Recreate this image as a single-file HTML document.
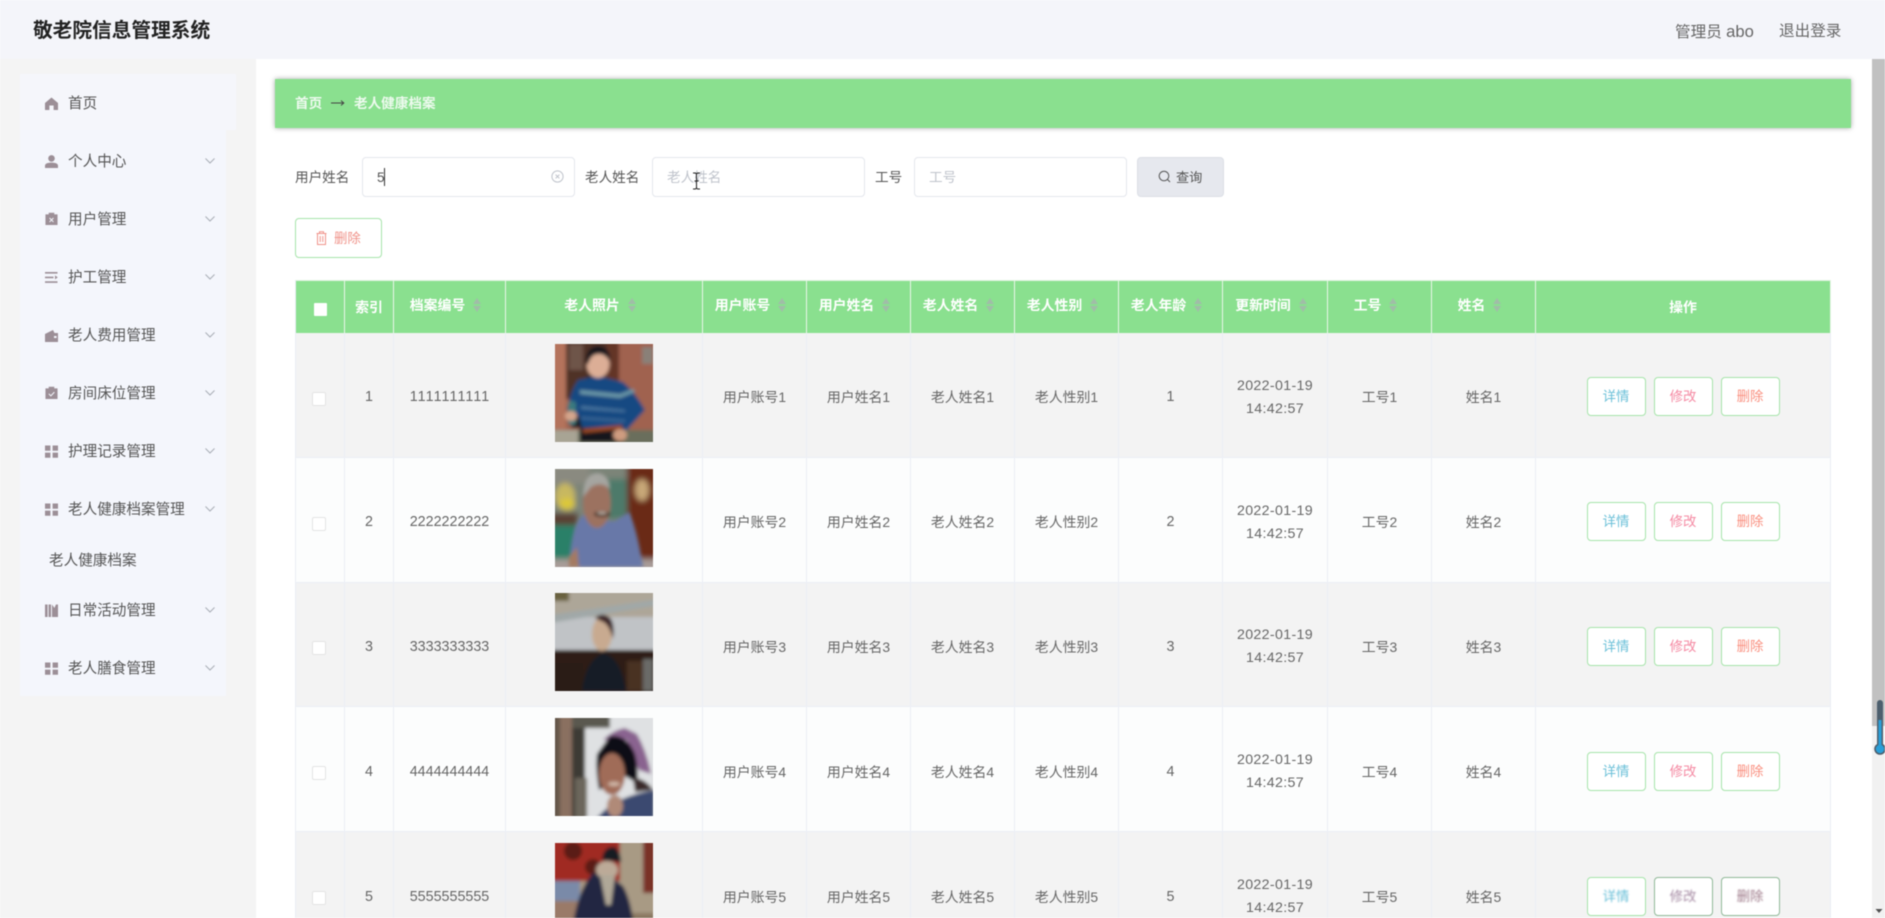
<!DOCTYPE html>
<html lang="zh-CN"><head><meta charset="utf-8"><title>敬老院信息管理系统</title>
<style>
*{box-sizing:border-box}
html,body{margin:0;padding:0;width:1885px;height:918px;overflow:hidden;background:#fff}
body{position:relative;font-family:"Liberation Sans","Noto Sans CJK SC",sans-serif;color:#666;font-kerning:none}
.a{position:absolute;white-space:nowrap}
#wrap{position:absolute;left:0;top:0;width:1885px;height:918px;overflow:hidden;filter:blur(.45px)}
.mi{position:absolute;left:68px;font-size:14.6px;line-height:20px;color:#555;white-space:nowrap;margin-top:1px}
.ic{position:absolute;left:45px;width:13px;height:13px;fill:#9c8f97}
.ch{position:absolute;left:205px;width:10px;height:6px;fill:none;stroke:#a8adb5;stroke-width:1}
.inp{position:absolute;top:157px;height:40px;background:#fff;border:1px solid #e4e7ed;border-radius:4px}
.lb{position:absolute;top:168px;font-size:13.6px;line-height:20px;color:#555;white-space:nowrap}
.ph{position:absolute;top:168px;font-size:13.6px;line-height:20px;color:#c0c4cc;white-space:nowrap}
table{position:absolute;left:295px;top:280px;width:1536px;table-layout:fixed;border-collapse:separate;border-spacing:0;font-size:13.9px;color:#666}
th{height:53px;background:#8ae08f;color:#fff;font-size:13.9px;font-weight:700;padding:0;text-align:center;border-right:1px solid #eaf6ea;border-top:1px solid #dff3df}
th:first-child,td:first-child{border-left:1px solid #ebeef5}
th.s{padding:0 8px 4px 0}
th i{display:inline-block;width:8px;height:14px;margin-left:8px;vertical-align:-2px;position:relative}
th i:before,th i:after{content:"";position:absolute;left:0;border-left:4px solid transparent;border-right:4px solid transparent}
th i:before{top:0;border-bottom:6px solid #a0bda8}
th i:after{bottom:0;border-top:6px solid #a0bda8}
td{height:124.8px;padding:6px 0 0;text-align:center;border-right:1px solid #ebeef5;border-bottom:1px solid #ebeef5;line-height:23px;vertical-align:middle}
tr.o td{background:#f3f3f3}
tr.e td{background:#fcfdfd}
td.n{font-size:14.3px}
td.t{font-size:14.2px;letter-spacing:.35px}
.cb{display:inline-block;width:14px;height:14px;background:#fff;border:1px solid #e4e4e4;border-radius:2px;vertical-align:middle;margin-left:-3px}
.cbh{display:inline-block;width:13px;height:13px;background:#fff;border-radius:1px;vertical-align:middle;margin-top:3px}
td svg.ph1{display:block;margin:0 0 0 49px;width:98px;height:98px;position:relative;top:-5px}
.b{display:inline-block;width:59px;height:39px;line-height:37px;background:#fff;border:1px solid #a6e4aa;border-radius:4px;font-size:13.4px;margin:0 4px;vertical-align:middle;position:relative;top:-1px}
.c1{color:#6bc0d8}.c2{color:#f58aa3}.c3{color:#fa8f7f}
.g{filter:blur(.7px)}
</style></head>
<body>
<div id="wrap">
<svg width="0" height="0" style="position:absolute"><defs><filter id="bl" x="-20%" y="-20%" width="140%" height="140%"><feGaussianBlur stdDeviation="1.8"/></filter><filter id="bl2" x="-30%" y="-30%" width="160%" height="160%"><feGaussianBlur stdDeviation="3"/></filter></defs></svg>

<!-- header -->
<div class="a" style="left:0;top:0;width:1885px;height:59px;background:#f4f5fa"></div>
<div class="a" style="left:33px;top:17px;font-size:19.7px;line-height:28px;font-weight:700;color:#222">敬老院信息管理系统</div>
<div class="a" style="left:1675px;top:21px;font-size:15.6px;line-height:22px;color:#666">管理员 <span style="font-size:16.6px">abo</span></div>
<div class="a" style="left:1779px;top:21px;font-size:15.6px;line-height:22px;color:#666">退出登录</div>

<!-- sidebar -->
<div class="a" style="left:0;top:59px;width:256px;height:859px;background:#f4f4f4"></div>
<div class="a" style="left:20px;top:74px;width:206px;height:622px;background:#f4f6fc"></div>
<div class="a" style="left:20px;top:74px;width:216px;height:56px;background:#f5f6fb"></div>

<svg class="ic" style="top:97px" viewBox="0 0 13 13"><path d="M6.5 0.5 L13 6 V13 H8.6 V8.5 H4.4 V13 H0 V6 Z"/></svg>
<div class="mi" style="top:93px">首页</div>

<svg class="ic" style="top:155px" viewBox="0 0 13 13"><circle cx="6.5" cy="3.4" r="3.3"/><path d="M0 13 V10.6 C0 8.6 2.6 7.6 6.5 7.6 S13 8.6 13 10.6 V13 Z"/></svg>
<div class="mi" style="top:151px">个人中心</div>
<svg class="ch" style="top:158px" viewBox="0 0 10 6"><path d="M.5 .5 5 5 9.5 .5"/></svg>

<svg class="ic" style="top:212px" viewBox="0 0 13 14"><path d="M0 2.5 H3.5 V.8 H9.5 V2.5 H13 V14 H0 Z"/><path d="M4.4 6.5 8.6 10.7 M8.6 6.5 4.4 10.7" stroke="#f4f6fc" stroke-width="1.1" fill="none"/></svg>
<div class="mi" style="top:209px">用户管理</div>
<svg class="ch" style="top:216px" viewBox="0 0 10 6"><path d="M.5 .5 5 5 9.5 .5"/></svg>

<svg class="ic" style="top:271px" viewBox="0 0 13 13"><path d="M0 1h12.5v1.6H0zM0 5.6h8.5v1.6H0zM10 4.4l2.8 2-2.8 2zM0 10.3h12.5v1.6H0z"/></svg>
<div class="mi" style="top:267px">护工管理</div>
<svg class="ch" style="top:274px" viewBox="0 0 10 6"><path d="M.5 .5 5 5 9.5 .5"/></svg>

<svg class="ic" style="top:329px" viewBox="0 0 13 13"><path d="M0 5 L8 1 L9.5 4 H13 V13 H0 Z"/><rect x="9" y="7" width="2.6" height="2" fill="#f4f6fc"/></svg>
<div class="mi" style="top:325px">老人费用管理</div>
<svg class="ch" style="top:332px" viewBox="0 0 10 6"><path d="M.5 .5 5 5 9.5 .5"/></svg>

<svg class="ic" style="top:386px" viewBox="0 0 13 14"><path d="M0 2.5 H3.5 V.8 H9.5 V2.5 H13 V14 H0 Z"/><path d="M3.6 8.4 5.8 10.6 9.6 6.6" stroke="#f4f6fc" stroke-width="1.1" fill="none"/></svg>
<div class="mi" style="top:383px">房间床位管理</div>
<svg class="ch" style="top:390px" viewBox="0 0 10 6"><path d="M.5 .5 5 5 9.5 .5"/></svg>

<svg class="ic" style="top:445px" viewBox="0 0 13 13"><path d="M0 .5h5.4v5.2H0zM7.6 .5H13v5.2H7.6zM0 7.6h5.4v5.2H0zM7.6 7.6H13v5.2H7.6z"/></svg>
<div class="mi" style="top:441px">护理记录管理</div>
<svg class="ch" style="top:448px" viewBox="0 0 10 6"><path d="M.5 .5 5 5 9.5 .5"/></svg>

<svg class="ic" style="top:503px" viewBox="0 0 13 13"><path d="M0 .5h5.4v5.2H0zM7.6 .5H13v5.2H7.6zM0 7.6h5.4v5.2H0zM7.6 7.6H13v5.2H7.6z"/></svg>
<div class="mi" style="top:499px">老人健康档案管理</div>
<svg class="ch" style="top:506px" viewBox="0 0 10 6"><path d="M.5 .5 5 5 9.5 .5"/></svg>

<div class="mi" style="left:49px;top:550px;color:#555">老人健康档案</div>

<svg class="ic" style="top:604px" viewBox="0 0 13 13"><path d="M0 .5h2.6V13H0zM3.6 .5h2.4V13H3.6zM7 .5 L9.4 4 L11 .5 H13 V13 H7Z"/></svg>
<div class="mi" style="top:600px">日常活动管理</div>
<svg class="ch" style="top:607px" viewBox="0 0 10 6"><path d="M.5 .5 5 5 9.5 .5"/></svg>

<svg class="ic" style="top:662px" viewBox="0 0 13 13"><path d="M0 .5h5.4v5.2H0zM7.6 .5H13v5.2H7.6zM0 7.6h5.4v5.2H0zM7.6 7.6H13v5.2H7.6z"/></svg>
<div class="mi" style="top:658px">老人膳食管理</div>
<svg class="ch" style="top:665px" viewBox="0 0 10 6"><path d="M.5 .5 5 5 9.5 .5"/></svg>

<!-- breadcrumb -->
<div class="a" style="left:275px;top:79px;width:1576px;height:49px;background:#8ae08f;box-shadow:0 0 5px rgba(0,0,0,.35)"></div>
<div class="a" style="left:295px;top:94px;font-size:13.6px;line-height:20px;color:#fff;font-weight:700;opacity:.85">首页</div>
<svg class="a" style="left:331px;top:99px" width="14" height="8" viewBox="0 0 14 8"><path d="M0 4h12.5M10 1.6 12.8 4 10 6.4" fill="none" stroke="#444" stroke-width="1"/></svg>
<div class="a" style="left:354px;top:94px;font-size:13.6px;line-height:20px;color:#fff;font-weight:700;opacity:.85">老人健康档案</div>

<!-- search -->
<div class="lb" style="left:295px">用户姓名</div>
<div class="inp" style="left:362px;width:213px"></div>
<div class="a" style="left:377px;top:168px;font-size:13.6px;line-height:20px;color:#555">5</div>
<div class="a" style="left:384px;top:168px;width:1px;height:18px;background:#333"></div>
<svg class="a" style="left:551px;top:170px" width="13" height="13" viewBox="0 0 13 13"><circle cx="6.5" cy="6.5" r="5.6" fill="none" stroke="#c0c4cc"/><path d="M4.6 4.6 8.4 8.4M8.4 4.6 4.6 8.4" stroke="#c0c4cc"/></svg>
<div class="lb" style="left:585px">老人姓名</div>
<div class="inp" style="left:652px;width:213px"></div>
<div class="ph" style="left:667px">老人姓名</div>
<svg class="a" style="left:692px;top:172px" width="9" height="18" viewBox="0 0 9 18"><path d="M1 1h2.5l1 1 1-1H8M4.5 2v14M1 17h2.5l1-1 1 1H8M2.5 9h4" fill="none" stroke="#222" stroke-width="1"/></svg>
<div class="lb" style="left:875px">工号</div>
<div class="inp" style="left:914px;width:213px"></div>
<div class="ph" style="left:929px">工号</div>
<div class="a" style="left:1137px;top:157px;width:87px;height:40px;background:#e6e8ee;border:1px solid #dcdfe6;border-radius:4px"></div>
<svg class="a" style="left:1158px;top:170px" width="13" height="13" viewBox="0 0 13 13"><circle cx="6" cy="6" r="4.8" fill="none" stroke="#555"/><path d="M9.5 9.5 12 12" stroke="#555"/></svg>
<div class="a" style="left:1176px;top:168px;font-size:13.2px;line-height:20px;color:#555">查询</div>

<!-- delete -->
<div class="a" style="left:295px;top:218px;width:87px;height:40px;background:#fff;border:1px solid #a6e4aa;border-radius:4px"></div>
<svg class="a" style="left:316px;top:231px" width="11" height="14" viewBox="0 0 11 14"><path d="M.5 2.5h10M3.5 2.5V.8h4v1.7M1.5 2.5v11h8v-11M4.2 5v6M6.8 5v6" fill="none" stroke="#f0938a" stroke-width="1"/></svg>
<div class="a" style="left:334px;top:229px;font-size:13.4px;line-height:20px;color:#f0938a">删除</div>

<!-- table -->
<table>
<colgroup><col style="width:50px"><col style="width:49px"><col style="width:112px"><col style="width:197px"><col style="width:104px"><col style="width:104px"><col style="width:104px"><col style="width:104px"><col style="width:104px"><col style="width:105px"><col style="width:104px"><col style="width:104px"><col style="width:295px"></colgroup>
<tr><th><span class="cbh"></span></th><th>索引</th><th class="s">档案编号<i></i></th><th class="s">老人照片<i></i></th><th class="s">用户账号<i></i></th><th class="s">用户姓名<i></i></th><th class="s">老人姓名<i></i></th><th class="s">老人性别<i></i></th><th class="s">老人年龄<i></i></th><th class="s">更新时间<i></i></th><th class="s">工号<i></i></th><th class="s">姓名<i></i></th><th>操作</th></tr>

<tr class="o"><td><span class="cb"></span></td><td class="n">1</td><td class="n">1111111111</td><td>
<svg class="ph1" viewBox="0 0 98 98"><g filter="url(#bl)"><rect x="-5" y="-5" width="108" height="108" fill="#a06250"/><rect x="11" y="-5" width="44" height="60" fill="#4f3226"/><rect x="14" y="0" width="14" height="26" fill="#6e5448"/><rect x="52" y="-5" width="12" height="60" fill="#643428"/><rect x="-5" y="-5" width="16" height="90" fill="#b4735c"/><rect x="87" y="3" width="11" height="17" fill="#8a8078"/><rect x="-5" y="86" width="110" height="20" fill="#6a6e5c"/><rect x="-5" y="86" width="28" height="18" fill="#a8a494"/><path d="M33 31 L38 33 L28 84 L16 84 Z" fill="#1c1c22"/><path d="M23 36 L43 32 L68 38 Q80 48 90 66 L72 86 L63 84 L28 87 L24 72 L12 66 Q16 46 23 36Z" fill="#194a82"/><path d="M25 46 L65 50 L78 45 L80 48 L65 54 L25 50Z" fill="#6c9aa8"/><path d="M26 62 L70 66 L70 68 L26 65Z" fill="#4a78a0"/><path d="M26 73 L70 76 L70 78 L26 75Z" fill="#3f6c98"/><path d="M25 84 L68 82 L68 98 L25 98Z" fill="#19191e"/><path d="M28 85 L67 81 L67 85 L28 89Z" fill="#9a4a22"/><ellipse cx="43" cy="20" rx="11.5" ry="14" fill="#dcae96"/><path d="M31 20 Q30 3 43 2 Q56 3 55 18 Q50 9 43 10 Q36 10 33 20Z" fill="#15151a"/><rect x="13" y="57" width="8" height="24" rx="3" fill="#3a7a7e"/><ellipse cx="16" cy="72" rx="6" ry="5" fill="#d6a68c"/><ellipse cx="65" cy="91" rx="7" ry="6" fill="#cf9c80"/></g></svg></td><td>用户账号1</td><td>用户姓名1</td><td>老人姓名1</td><td>老人性别1</td><td class="n">1</td><td class="t">2022-01-19<br>14:42:57</td><td>工号1</td><td>姓名1</td><td><span class="b c1">详情</span><span class="b c2">修改</span><span class="b c3">删除</span></td></tr>

<tr class="e"><td><span class="cb"></span></td><td class="n">2</td><td class="n">2222222222</td><td>
<svg class="ph1" viewBox="0 0 98 98"><g filter="url(#bl2)"><rect x="-5" y="-5" width="108" height="108" fill="#7c8478"/><rect x="-5" y="-5" width="40" height="20" fill="#8a8a80"/><rect x="52" y="10" width="22" height="40" fill="#4e7a6a"/><rect x="72" y="-5" width="35" height="108" fill="#6a2a18"/><rect x="-5" y="44" width="28" height="14" fill="#5a4030"/><rect x="-5" y="56" width="28" height="34" fill="#2a8068"/><ellipse cx="10" cy="27" rx="10" ry="13" fill="#c8b860"/><ellipse cx="12" cy="35" rx="8" ry="6" fill="#dcc838"/><ellipse cx="87" cy="21" rx="7" ry="11" fill="#c8a878"/><rect x="-5" y="90" width="110" height="14" fill="#a89c98"/></g><g filter="url(#bl)"><path d="M14 98 Q16 56 28 46 L42 52 L60 52 L74 43 Q82 60 88 98Z" fill="#6878a8"/><path d="M14 88 L22 78 L24 98 L14 98Z" fill="#a47a62"/><ellipse cx="42" cy="34" rx="14" ry="25" fill="#9c7260"/><path d="M28 28 Q28 5 42 4 Q54 5 55 20 Q46 12 36 18Z" fill="#a5a5a0"/><ellipse cx="47" cy="45" rx="8" ry="3" fill="#43291f"/><ellipse cx="47" cy="44" rx="5" ry="1.3" fill="#c8bcb0"/></g></svg></td><td>用户账号2</td><td>用户姓名2</td><td>老人姓名2</td><td>老人性别2</td><td class="n">2</td><td class="t">2022-01-19<br>14:42:57</td><td>工号2</td><td>姓名2</td><td><span class="b c1">详情</span><span class="b c2">修改</span><span class="b c3">删除</span></td></tr>

<tr class="o"><td><span class="cb"></span></td><td class="n">3</td><td class="n">3333333333</td><td>
<svg class="ph1" viewBox="0 0 98 98"><g filter="url(#bl)"><rect x="-5" y="-5" width="108" height="108" fill="#ada698"/><rect x="-5" y="24" width="110" height="34" fill="#c0c3c6"/><path d="M-5 22 L105 6 L105 12 L-5 30Z" fill="#a0a8a8"/><rect x="-5" y="57" width="110" height="50" fill="#2e1a14"/><rect x="-5" y="-5" width="19" height="13" fill="#6a6240"/><rect x="0" y="70" width="28" height="30" fill="#2a1a14"/><rect x="72" y="68" width="16" height="30" fill="#4a3020"/><rect x="88" y="66" width="10" height="32" fill="#6a6a68"/><path d="M27 98 Q30 68 48 60 Q66 64 71 98Z" fill="#141a28"/><ellipse cx="47" cy="41" rx="10" ry="17" fill="#c8aa90"/><path d="M40 25 Q48 18 56 26 Q60 34 58 46 Q54 30 46 28Z" fill="#3a2028"/></g></svg></td><td>用户账号3</td><td>用户姓名3</td><td>老人姓名3</td><td>老人性别3</td><td class="n">3</td><td class="t">2022-01-19<br>14:42:57</td><td>工号3</td><td>姓名3</td><td><span class="b c1">详情</span><span class="b c2">修改</span><span class="b c3">删除</span></td></tr>

<tr class="e"><td><span class="cb"></span></td><td class="n">4</td><td class="n">4444444444</td><td>
<svg class="ph1" viewBox="0 0 98 98"><g filter="url(#bl)"><rect x="-5" y="-5" width="108" height="108" fill="#dfe1e3"/><rect x="-5" y="-5" width="10" height="108" fill="#63564a"/><rect x="5" y="-5" width="12" height="108" fill="#8a7060"/><rect x="17" y="-5" width="13" height="108" fill="#3c3a36"/><rect x="20" y="60" width="12" height="40" fill="#6c665c"/><rect x="17" y="-5" width="38" height="15" fill="#5a5850"/><path d="M42 100 Q60 78 100 72 V104 H42Z" fill="#3a4a70"/><ellipse cx="60" cy="88" rx="8" ry="11" fill="#b08a78"/><path d="M48 22 Q58 12 70 10 L82 16 Q92 34 96 56 L84 52 L72 22Z" fill="#8a6490"/><path d="M55 18 Q72 16 80 36 Q84 52 82 65 L70 58 L44 72 Q40 50 42 36Z" fill="#0e0e12"/><path d="M78 60 Q90 60 98 72 L80 74Z" fill="#3a2a2a"/><ellipse cx="57" cy="56" rx="13" ry="21" fill="#a06c58"/><ellipse cx="59" cy="66" rx="6" ry="2.2" fill="#d0b8a8"/></g></svg></td><td>用户账号4</td><td>用户姓名4</td><td>老人姓名4</td><td>老人性别4</td><td class="n">4</td><td class="t">2022-01-19<br>14:42:57</td><td>工号4</td><td>姓名4</td><td><span class="b c1">详情</span><span class="b c2">修改</span><span class="b c3">删除</span></td></tr>

<tr class="o"><td><span class="cb"></span></td><td class="n">5</td><td class="n">5555555555</td><td>
<svg class="ph1" viewBox="0 0 98 98"><g filter="url(#bl)"><rect x="-5" y="-5" width="108" height="108" fill="#a89a84"/><rect x="-5" y="-5" width="70" height="43" fill="#a02a20"/><rect x="88" y="-5" width="14" height="55" fill="#7a3028"/><circle cx="18" cy="8" r="9" fill="#5a1c18"/><circle cx="38" cy="24" r="8" fill="#5a1c18"/><rect x="-5" y="38" width="30" height="20" fill="#7a8aa8"/><rect x="-5" y="58" width="30" height="50" fill="#9a7a68"/><rect x="70" y="70" width="30" height="30" fill="#8a7860"/><path d="M16 98 Q20 50 38 30 L56 34 L68 43 Q78 60 80 98Z" fill="#242642"/><ellipse cx="52" cy="27" rx="11" ry="9" fill="#bcaa98"/><path d="M45 32 L60 32 L56 62 L51 62Z" fill="#b0a898"/><path d="M47 17 Q48 3 60 4 Q66 10 66 19Z" fill="#141a22"/></g></svg></td><td>用户账号5</td><td>用户姓名5</td><td>老人姓名5</td><td>老人性别5</td><td class="n">5</td><td class="t">2022-01-19<br>14:42:57</td><td>工号5</td><td>姓名5</td><td><span class="b c1"><span class="g" style="display:inline-block">详情</span></span><span class="b" style="color:#a88ea6;border-color:#90b898"><span class="g" style="display:inline-block">修改</span></span><span class="b" style="color:#a07d8c;border-color:#90b898"><span class="g" style="display:inline-block">删除</span></span></td></tr>
</table>

<!-- scrollbar -->
<div class="a" style="left:1872px;top:59px;width:13px;height:859px;background:#f1f1f1"></div>
<div class="a" style="left:1872px;top:59px;width:13px;height:667px;background:#c1c1c1"></div>
<svg class="a" style="left:1875px;top:908px" width="8" height="6" viewBox="0 0 8 6"><path d="M.5 1h7L4 5z" fill="#505050"/></svg>
<svg class="a" style="left:1872px;top:698px" width="13" height="60" viewBox="0 0 13 60"><path d="M8 5V50" stroke="#4d5f6e" stroke-width="6" stroke-linecap="round"/><circle cx="8" cy="51" r="5" fill="#2a9fd8" stroke="#4d5f6e" stroke-width="1.6"/><path d="M8 22V48" stroke="#2a9fd8" stroke-width="3"/></svg>
</div>
</body></html>
